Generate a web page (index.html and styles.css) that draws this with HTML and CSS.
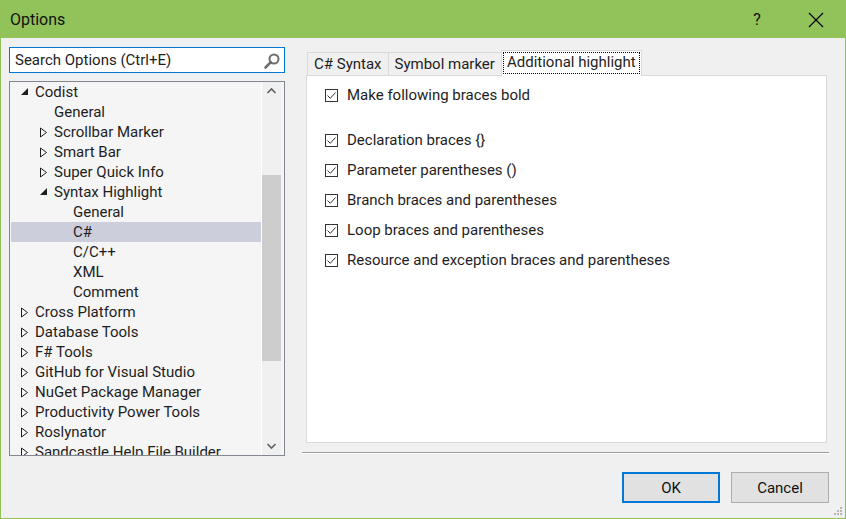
FILE: index.html
```html
<!DOCTYPE html>
<html>
<head>
<meta charset="utf-8">
<link rel="stylesheet" href="styles.css">
</head>
<body>
<div class="window">
  <div class="titlebar">
    <span class="title">Options</span>
    <span class="help">?</span>
    <svg class="close" width="16" height="16" viewBox="0 0 16 16"><path d="M1 1 L15 15 M15 1 L1 15" stroke="#000" stroke-width="1.2" fill="none"/></svg>
  </div>
  <div class="content">
    <div class="left">
      <div class="search">
        <span class="search-text">Search Options (Ctrl+E)</span>
        <svg class="search-icon" width="18" height="18" viewBox="0 0 18 18"><circle cx="11" cy="7" r="4.5" stroke="#6d6d6d" stroke-width="2" fill="none"/><path d="M7.8 10.2 L2.5 15.5" stroke="#6d6d6d" stroke-width="2.6" stroke-linecap="round"/></svg>
      </div>
      <div class="tree">
        <div class="tree-items">
          <div class="row l0"><svg class="exp" width="9" height="9" viewBox="0 0 9 9"><path d="M8 1 L8 8 L1 8 Z" fill="#1e1e1e"/></svg><span>Codist</span></div>
          <div class="row l1"><span class="noarrow"></span><span>General</span></div>
          <div class="row l1"><svg class="col" width="9" height="11" viewBox="0 0 9 11"><path d="M1.5 1 L7.5 5.5 L1.5 10 Z" stroke="#1e1e1e" fill="none"/></svg><span>Scrollbar Marker</span></div>
          <div class="row l1"><svg class="col" width="9" height="11" viewBox="0 0 9 11"><path d="M1.5 1 L7.5 5.5 L1.5 10 Z" stroke="#1e1e1e" fill="none"/></svg><span>Smart Bar</span></div>
          <div class="row l1"><svg class="col" width="9" height="11" viewBox="0 0 9 11"><path d="M1.5 1 L7.5 5.5 L1.5 10 Z" stroke="#1e1e1e" fill="none"/></svg><span>Super Quick Info</span></div>
          <div class="row l1"><svg class="exp" width="9" height="9" viewBox="0 0 9 9"><path d="M8 1 L8 8 L1 8 Z" fill="#1e1e1e"/></svg><span>Syntax Highlight</span></div>
          <div class="row l2"><span class="noarrow"></span><span>General</span></div>
          <div class="row l2 selected"><span class="noarrow"></span><span>C#</span></div>
          <div class="row l2"><span class="noarrow"></span><span>C/C++</span></div>
          <div class="row l2"><span class="noarrow"></span><span>XML</span></div>
          <div class="row l2"><span class="noarrow"></span><span>Comment</span></div>
          <div class="row l0"><svg class="col" width="9" height="11" viewBox="0 0 9 11"><path d="M1.5 1 L7.5 5.5 L1.5 10 Z" stroke="#1e1e1e" fill="none"/></svg><span>Cross Platform</span></div>
          <div class="row l0"><svg class="col" width="9" height="11" viewBox="0 0 9 11"><path d="M1.5 1 L7.5 5.5 L1.5 10 Z" stroke="#1e1e1e" fill="none"/></svg><span>Database Tools</span></div>
          <div class="row l0"><svg class="col" width="9" height="11" viewBox="0 0 9 11"><path d="M1.5 1 L7.5 5.5 L1.5 10 Z" stroke="#1e1e1e" fill="none"/></svg><span>F# Tools</span></div>
          <div class="row l0"><svg class="col" width="9" height="11" viewBox="0 0 9 11"><path d="M1.5 1 L7.5 5.5 L1.5 10 Z" stroke="#1e1e1e" fill="none"/></svg><span>GitHub for Visual Studio</span></div>
          <div class="row l0"><svg class="col" width="9" height="11" viewBox="0 0 9 11"><path d="M1.5 1 L7.5 5.5 L1.5 10 Z" stroke="#1e1e1e" fill="none"/></svg><span>NuGet Package Manager</span></div>
          <div class="row l0"><svg class="col" width="9" height="11" viewBox="0 0 9 11"><path d="M1.5 1 L7.5 5.5 L1.5 10 Z" stroke="#1e1e1e" fill="none"/></svg><span>Productivity Power Tools</span></div>
          <div class="row l0"><svg class="col" width="9" height="11" viewBox="0 0 9 11"><path d="M1.5 1 L7.5 5.5 L1.5 10 Z" stroke="#1e1e1e" fill="none"/></svg><span>Roslynator</span></div>
          <div class="row l0"><svg class="col" width="9" height="11" viewBox="0 0 9 11"><path d="M1.5 1 L7.5 5.5 L1.5 10 Z" stroke="#1e1e1e" fill="none"/></svg><span>Sandcastle Help File Builder</span></div>
        </div>
        <div class="scrollbar">
          <svg class="sb-arrow" width="19" height="19" viewBox="0 0 19 19"><path d="M5.5 11 L9.5 7 L13.5 11" stroke="#606060" stroke-width="1.6" fill="none"/></svg>
          <div class="sb-track">
            <div class="sb-thumb"></div>
          </div>
          <svg class="sb-arrow" width="19" height="19" viewBox="0 0 19 19"><path d="M5.5 8 L9.5 12 L13.5 8" stroke="#606060" stroke-width="1.6" fill="none"/></svg>
        </div>
      </div>
    </div>
    <div class="right">
      <div class="tabs">
        <div class="tab">C# Syntax</div>
        <div class="tab">Symbol marker</div>
        <div class="tab active"><span class="focus">Additional highlight</span></div>
      </div>
      <div class="panel">
        <label class="check first"><span class="box"><svg width="11" height="11" viewBox="0 0 11 11"><path d="M1.5 5.5 L4.3 8.3 L9.5 2.5" stroke="#333" stroke-width="1" fill="none"/></svg></span>Make following braces bold</label>
        <label class="check gap"><span class="box"><svg width="11" height="11" viewBox="0 0 11 11"><path d="M1.5 5.5 L4.3 8.3 L9.5 2.5" stroke="#333" stroke-width="1" fill="none"/></svg></span>Declaration braces {}</label>
        <label class="check"><span class="box"><svg width="11" height="11" viewBox="0 0 11 11"><path d="M1.5 5.5 L4.3 8.3 L9.5 2.5" stroke="#333" stroke-width="1" fill="none"/></svg></span>Parameter parentheses ()</label>
        <label class="check"><span class="box"><svg width="11" height="11" viewBox="0 0 11 11"><path d="M1.5 5.5 L4.3 8.3 L9.5 2.5" stroke="#333" stroke-width="1" fill="none"/></svg></span>Branch braces and parentheses</label>
        <label class="check"><span class="box"><svg width="11" height="11" viewBox="0 0 11 11"><path d="M1.5 5.5 L4.3 8.3 L9.5 2.5" stroke="#333" stroke-width="1" fill="none"/></svg></span>Loop braces and parentheses</label>
        <label class="check"><span class="box"><svg width="11" height="11" viewBox="0 0 11 11"><path d="M1.5 5.5 L4.3 8.3 L9.5 2.5" stroke="#333" stroke-width="1" fill="none"/></svg></span>Resource and exception braces and parentheses</label>
      </div>
      <div class="separator"></div>
      <div class="buttons">
        <button class="btn default">OK</button>
        <button class="btn">Cancel</button>
      </div>
    </div>
  </div>
  <svg class="grip" width="12" height="12" viewBox="0 0 12 12">
    <rect x="9" y="3" width="2" height="2" fill="#b8b8b8"/>
    <rect x="6" y="6" width="2" height="2" fill="#b8b8b8"/>
    <rect x="9" y="6" width="2" height="2" fill="#b8b8b8"/>
    <rect x="3" y="9" width="2" height="2" fill="#b8b8b8"/>
    <rect x="6" y="9" width="2" height="2" fill="#b8b8b8"/>
    <rect x="9" y="9" width="2" height="2" fill="#b8b8b8"/>
  </svg>
</div>
</body>
</html>
```

FILE: styles.css
```css
* { box-sizing: border-box; }
html, body { margin: 0; padding: 0; }
body {
  width: 846px;
  height: 519px;
  font-family: Roboto, "Noto Sans", sans-serif;
  font-size: 15px;
  color: #1e1e1e;
  overflow: hidden;
}
.window {
  position: relative;
  width: 846px;
  height: 519px;
  border: 1px solid #92c35a;
  background: #f0f0f0;
  display: flex;
  flex-direction: column;
}
.titlebar {
  height: 37px;
  background: #92c35a;
  display: flex;
  align-items: center;
  padding-left: 9px;
  flex-shrink: 0;
}
.title {
  font-size: 16px;
  color: #111;
  flex: 1;
  padding-bottom: 1px;
}
.help {
  font-size: 16px;
  color: #111;
  width: 14px;
  margin-right: 44px;
  text-align: center;
}
.close {
  margin-right: 21px;
}
.content {
  display: flex;
  padding: 9px 0 0 8px;
  flex: 1;
}
.left {
  width: 276px;
  display: flex;
  flex-direction: column;
  gap: 8px;
}
.search {
  height: 26px;
  border: 1px solid #0078d7;
  background: #fff;
  display: flex;
  align-items: center;
  padding: 0 3px 0 5px;
}
.search-text {
  flex: 1;
  color: #1e1e1e;
}
.search-icon { margin-top: 1px; }
.tree {
  height: 375px;
  border: 1px solid #828790;
  background: #f5f5f5;
  display: flex;
  overflow: hidden;
}
.tree-items {
  width: 252px;
  padding: 0 0 0 1px;
  overflow: hidden;
  border-right: 1px solid #fff;
}
.row {
  height: 20px;
  display: flex;
  align-items: center;
  white-space: nowrap;
}
.row.l0 { padding-left: 9px; }
.row.l1 { padding-left: 28px; }
.row.l2 { padding-left: 47px; }
.row svg, .noarrow {
  width: 9px;
  flex-shrink: 0;
  margin-right: 6px;
}
.row svg.exp { margin-top: -1px; }
.row.selected { background: #cccedb; }
.scrollbar {
  width: 19px;
  background: #f0f0f0;
  display: flex;
  flex-direction: column;
}
.sb-arrow { flex-shrink: 0; }
.sb-track {
  flex: 1;
  padding-top: 74px;
}
.sb-thumb {
  height: 186px;
  background: #cdcdcd;
}
.right {
  width: 527px;
  margin-left: 17px;
  display: flex;
  flex-direction: column;
}
.tabs {
  display: flex;
  align-items: flex-end;
  padding-left: 5px;
  height: 28px;
}
.tab {
  height: 23px;
  padding: 0 6px;
  border: 1px solid #d9d9d9;
  border-bottom: none;
  border-right: none;
  background: #f0f0f0;
  display: flex;
  align-items: center;
}
.tab.active {
  height: 26px;
  background: #fff;
  border-right: 1px solid #d9d9d9;
  padding: 0 2px;
  margin-bottom: -1px;
  position: relative;
  z-index: 1;
  align-items: flex-start;
  padding-top: 2px;
}
.focus {
  outline: 1px dotted #000;
  padding: 0 3px 1px 3px;
  line-height: 19px;
}
.panel {
  margin-left: 4px;
  width: 521px;
  height: 368px;
  background: #fff;
  border: 1px solid #d9d9d9;
  padding: 11px 0 0 18px;
  display: flex;
  flex-direction: column;
}
.check {
  display: flex;
  align-items: center;
  height: 16px;
  margin-bottom: 14px;
}
.check.gap { margin-top: 15px; }
.box {
  width: 13px;
  height: 13px;
  border: 1px solid #333;
  background: #fff;
  margin-right: 9px;
  display: flex;
  align-items: center;
  justify-content: center;
}
.separator {
  margin-top: 9px;
  height: 2px;
  border-top: 1px solid #a0a0a0;
  border-bottom: 1px solid #fff;
}
.buttons {
  display: flex;
  justify-content: flex-end;
  gap: 11px;
  margin-top: 18px;
}
.btn {
  width: 98px;
  height: 31px;
  font-family: Roboto, "Noto Sans", sans-serif;
  font-size: 15px;
  color: #111;
  background: #e1e1e1;
  border: 1px solid #adadad;
  padding: 0;
}
.btn.default {
  border: 2px solid #0078d7;
}
.grip {
  position: absolute;
  right: 2px;
  bottom: 2px;
}
```
